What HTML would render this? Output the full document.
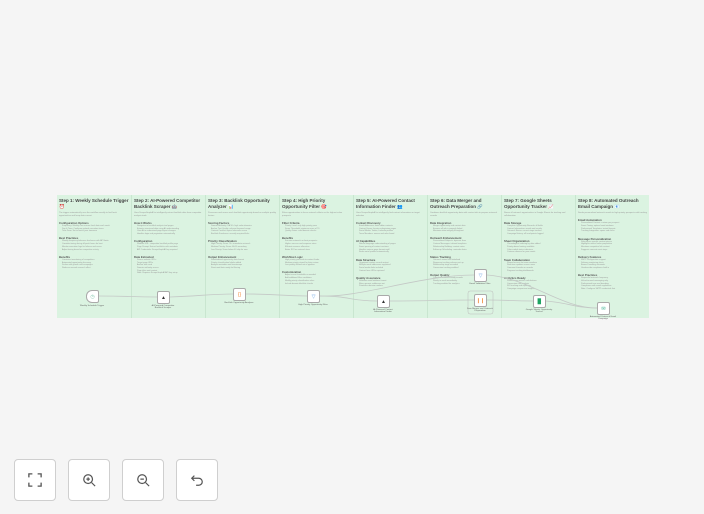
<!DOCTYPE html>
<html><head><meta charset="utf-8"><style>
*{margin:0;padding:0;box-sizing:border-box}
body{width:704px;height:514px;overflow:hidden;background:#f5f5f5;font-family:"Liberation Sans",sans-serif;position:relative}
.sticky{position:absolute;left:57px;top:195px;width:592px;height:123px;background:#dbf3e1}
.col{position:absolute;top:195px;width:74px;height:123px;border-left:0.5px solid #c9e6d0;padding:2px 2px;overflow:hidden}
.col h1{font-size:4.5px;line-height:5.6px;color:#444;font-weight:bold;margin-top:1px}
.col p{font-size:2.1px;line-height:2.6px;color:#999;margin-top:3px}
.col h2{font-size:2.8px;color:#555;font-weight:bold;margin-top:3.5px}
.col li{list-style:none;font-size:2px;line-height:2.7px;color:#999;padding-left:3px;white-space:nowrap}
.node{position:absolute;width:13px;height:13px;background:#fff;border:0.6px solid #aaa;border-radius:2px;display:flex;align-items:center;justify-content:center;font-size:5px}
.lbl{position:absolute;font-size:2.2px;color:#666;text-align:center;width:30px}
.btn{position:absolute;top:459px;width:42px;height:42px;background:#fff;border:1px solid #cfcfcf;border-radius:4px;display:flex;align-items:center;justify-content:center}
</style></head><body>
<div class="sticky"></div>
<div class="col" style="left:57px;border-left:none"><h1>Step 1: Weekly Schedule Trigger ⏰</h1><p>The trigger automatically runs the workflow weekly to find fresh opportunities and keep data current</p><h2>Configuration Options</h2><li>Frequency: Weekly runs ensure fresh data each week</li><li>Day &amp; Time: Configure optimal execution times</li><li>Time Zone: Set to match your timezone</li><h2>Best Practices</h2><li>Weekly frequency balances freshness with API limits</li><li>Consider timing during off-peak hours for best</li><li>Monitor execution logs for failures and errors</li><li>Adjust timing based on competitor activity</li><h2>Benefits</h2><li>Consistent monitoring of competitors</li><li>Automated opportunity discovery</li><li>Scales with growth and campaigns</li><li>Reduces manual research effort</li></div>
<div class="col" style="left:131px"><h1>Step 2: AI-Powered Competitor Backlink Scraper 🤖</h1><p>Uses ScrapeGraphAI to intelligently extract backlink data from competitor analysis tools</p><h2>How it Works</h2><li>Navigates to backlink analysis tool pages</li><li>Extracts structured data using AI understanding</li><li>Uses AI to understand page layout changes</li><li>Handles login and pagination automatically</li><h2>Configuration</h2><li>Website URL: competitor backlink profile page</li><li>Page Prompt: Extract backlinks with metadata</li><li>API Credentials: ScrapeGraphAI key required</li><h2>Data Extracted</h2><li>Source website URLs</li><li>Target page URLs</li><li>Anchor text used</li><li>Domain authority scores</li><li>Page titles and context</li><li>Note: Requires ScrapeGraphAI API key setup</li></div>
<div class="col" style="left:205px"><h1>Step 3: Backlink Opportunity Analyzer 📊</h1><p>Processes and scores each backlink opportunity based on multiple quality factors</p><h2>Scoring Factors</h2><li>Domain Authority: DA 50+ high value domains</li><li>Anchor Text Quality: relevant keyword usage</li><li>Content Context: topical relevance score</li><li>Backlink Freshness: recently acquired links</li><h2>Priority Classification</h2><li>High Priority: Score 70+ immediate outreach</li><li>Medium Priority: Score 40-69 secondary</li><li>Low Priority: Score below 40 skip for now</li><h2>Output Enhancement</h2><li>Standardized opportunity data format</li><li>Priority classification labels added</li><li>Analysis metadata and timestamps</li><li>Structured data ready for filtering</li></div>
<div class="col" style="left:279px"><h1>Step 4: High Priority Opportunity Filter 🎯</h1><p>Filters opportunities to focus outreach efforts on the highest value prospects</p><h2>Filter Criteria</h2><li>Priority Level: only high priority pass</li><li>Score Threshold: minimum score of 70</li><li>Quality Gates: valid domain checks</li><h2>Benefits</h2><li>Focuses outreach on best prospects</li><li>Higher success and response rates</li><li>Efficient resource allocation</li><li>Better ROI on outreach time</li><h2>Workflow Logic</h2><li>High priority proceeds to contact finder</li><li>Medium priority stored for later review</li><li>Low priority filtered out of pipeline</li><h2>Customization</h2><li>Adjust score thresholds as needed</li><li>Add additional filter conditions</li><li>Modify priority classification rules</li><li>Include domain blacklist checks</li></div>
<div class="col" style="left:353px"><h1>Step 5: AI-Powered Contact Information Finder 👥</h1><p>Uses ScrapeGraphAI to intelligently find contact information on target websites</p><h2>Contact Discovery</h2><li>Email Addresses: finds editor contacts</li><li>Contact Forms: locates submission pages</li><li>Social Media: Twitter, LinkedIn profiles</li><li>Team Members: names and roles found</li><h2>AI Capabilities</h2><li>Natural language understanding of pages</li><li>Smart parsing of contact sections</li><li>Handles various page formats well</li><li>Finds social profiles automatically</li><h2>Data Structure</h2><li>Organized contact records output</li><li>Multiple email addresses supported</li><li>Social media links included</li><li>Contact form URLs captured</li><h2>Quality Assurance</h2><li>Validates email address format</li><li>Filters generic addresses out</li><li>Prioritizes decision makers</li></div>
<div class="col" style="left:427px"><h1>Step 6: Data Merger and Outreach Preparation 🔗</h1><p>Combines backlink opportunity data with contact info to prepare outreach records</p><h2>Data Integration</h2><li>Merges opportunity and contact data</li><li>Ensures all info is properly linked</li><li>Maintains data integrity throughout</li><h2>Outreach Enhancement</h2><li>Personalized Subjects: dynamic lines</li><li>Custom Messages: tailored templates</li><li>Relationship Building: context notes</li><li>Follow-up Scheduling: reminder dates</li><h2>Status Tracking</h2><li>Outreach status field initialized</li><li>Response tracking columns set up</li><li>Relationship stage recorded</li><li>Conversion tracking enabled</li><h2>Output Quality</h2><li>Complete outreach-ready records</li><li>Ready to send immediately</li><li>Tracking-enabled for analytics</li></div>
<div class="col" style="left:501px"><h1>Step 7: Google Sheets Opportunity Tracker 📈</h1><p>Stores all outreach opportunities in Google Sheets for tracking and collaboration</p><h2>Data Storage</h2><li>Complete Opportunity Records: all fields</li><li>Contact Information: emails and socials</li><li>Outreach Status: current stage tracked</li><li>Campaign History: all touchpoints logged</li><h2>Sheet Organization</h2><li>Chronological ordering by date added</li><li>Priority-based sorting available</li><li>Color-coded status indicators</li><li>Custom columns for your needs</li><h2>Team Collaboration</h2><li>Shared access for team members</li><li>Real-time updates across users</li><li>Comment threads on records</li><li>Progress tracking dashboards</li><h2>Analytics Ready</h2><li>Performance metrics calculations</li><li>Conversion rate analysis</li><li>ROI tracking and reporting</li><li>Campaign comparison insights</li></div>
<div class="col" style="left:575px"><h1>Step 8: Automated Outreach Email Campaign 📧</h1><p>Sends personalized outreach emails to high-priority prospects with tracking</p><h2>Email Automation</h2><li>Personalized Content: custom per prospect</li><li>Smart Timing: optimal send windows</li><li>Professional Templates: tested formats</li><li>Tracking Integration: opens and clicks</li><h2>Message Personalization</h2><li>References specific content pieces</li><li>Highlights mutual value proposition</li><li>Mentions competitor link context</li><li>Suggests concrete next steps</li><h2>Delivery Features</h2><li>SMTP configuration support</li><li>Delivery monitoring alerts</li><li>Bounce handling automatic</li><li>Unsubscribe compliance built in</li><h2>Best Practices</h2><li>Respectful outreach frequency</li><li>Value-focused messaging only</li><li>Professional tone and branding</li><li>Compliance with email regulations</li><li>Note: Configure SMTP credentials first</li></div>
<svg style="position:absolute;left:0;top:0" width="704" height="514">
<g fill="none" stroke="#c4c8c6" stroke-width="0.8">
<path d="M98 296 C130 296 130 297 157 297"/>
<path d="M170 297 C200 296 210 294 233 294"/>
<path d="M246 294 C280 294 280 296 307 296"/>
<path d="M320 296 C350 296 350 301 377 301"/>
<path d="M390 301 C430 301 440 300 474 300"/>
<path d="M320 296 C360 298 420 275 474 275"/>
<path d="M487 300 C510 300 510 301 533 301"/>
<path d="M487 275 C530 278 560 308 597 308"/>
<path d="M546 301 C570 303 575 308 597 308"/>
</g>
<rect x="468" y="291" width="25" height="23" rx="2" fill="none" stroke="#bbb" stroke-width="0.5"/>
</svg>
<div class="node" style="left:86px;top:290px;border-radius:6px 2px 2px 6px;color:#7bc4a8">◷</div><div class="lbl" style="left:77px;top:305px">Weekly Schedule Trigger</div>
<div class="node" style="left:157px;top:291px;color:#333">▲</div><div class="lbl" style="left:148px;top:305px">AI-Powered Competitor Backlink Scraper</div>
<div class="node" style="left:233px;top:288px;color:#f08a3a">{}</div><div class="lbl" style="left:224px;top:302px">Backlink Opportunity Analyzer</div>
<div class="node" style="left:307px;top:290px;color:#5b9be0">▽</div><div class="lbl" style="left:298px;top:304px">High Priority Opportunity Filter</div>
<div class="node" style="left:377px;top:295px;color:#333">▲</div><div class="lbl" style="left:368px;top:309px">AI-Powered Contact Information Finder</div>
<div class="node" style="left:474px;top:269px;color:#5b9be0">▽</div><div class="lbl" style="left:465px;top:283px">Email Validation Filter</div>
<div class="node" style="left:474px;top:294px;color:#f08a3a">❙❙</div><div class="lbl" style="left:465px;top:308px">Data Merger and Outreach Preparation</div>
<div class="node" style="left:533px;top:295px;color:#1ea362">▉</div><div class="lbl" style="left:524px;top:309px">Google Sheets Opportunity Tracker</div>
<div class="node" style="left:597px;top:302px;color:#3bb08f">✉</div><div class="lbl" style="left:588px;top:316px">Automated Outreach Email Campaign</div>
<div class="btn" style="left:14px"><svg width="14" height="14" viewBox="0 0 16 16" fill="none" stroke="#555" stroke-width="1.5"><path d="M1 5V1h4M11 1h4v4M15 11v4h-4M5 15H1v-4"/></svg></div>
<div class="btn" style="left:68px"><svg width="14" height="14" viewBox="0 0 16 16" fill="none" stroke="#555" stroke-width="1.4"><circle cx="7" cy="7" r="5"/><path d="M11 11l4 4M7 5v4M5 7h4"/></svg></div>
<div class="btn" style="left:122px"><svg width="14" height="14" viewBox="0 0 16 16" fill="none" stroke="#555" stroke-width="1.4"><circle cx="7" cy="7" r="5"/><path d="M11 11l4 4M5 7h4"/></svg></div>
<div class="btn" style="left:176px"><svg width="14" height="14" viewBox="0 0 16 16" fill="none" stroke="#555" stroke-width="1.4"><path d="M5 3L2 6l3 3M2 6h8a4 4 0 010 8H7"/></svg></div>
</body></html>
